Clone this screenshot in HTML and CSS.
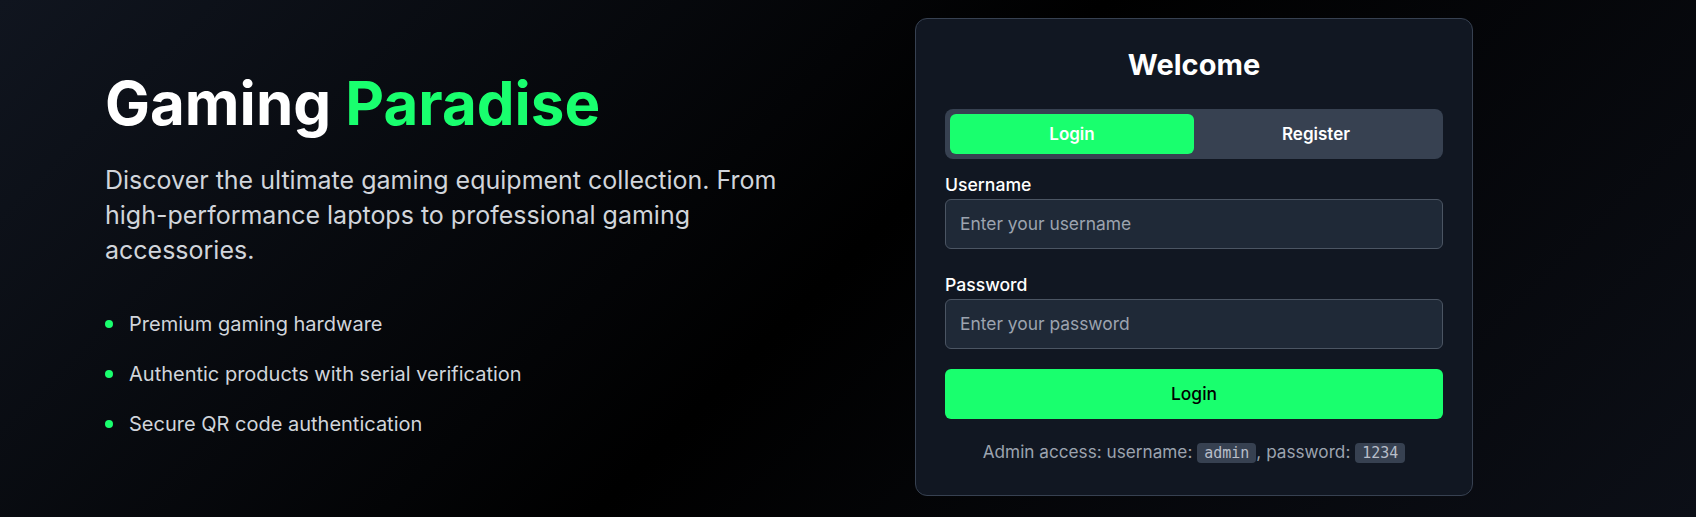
FILE: index.html
```html
<!DOCTYPE html>
<html lang="en">
<head>
<meta charset="utf-8">
<title>Gaming Paradise</title>
<link rel="stylesheet" href="styles.css">
</head>
<body>
<main class="page">
  <section class="hero">
    <h1 class="hero-title">Gaming <span class="accent">Paradise</span></h1>
    <p class="hero-text">Discover the ultimate gaming equipment collection. From high-performance laptops to professional gaming accessories.</p>
    <ul class="features">
      <li class="feature"><span class="dot"></span>Premium gaming hardware</li>
      <li class="feature"><span class="dot"></span>Authentic products with serial verification</li>
      <li class="feature"><span class="dot"></span>Secure QR code authentication</li>
    </ul>
  </section>
  <section class="card">
    <h2 class="card-title">Welcome</h2>
    <div class="tabs">
      <button class="tab tab-active">Login</button>
      <button class="tab">Register</button>
    </div>
    <div class="field">
      <label class="label">Username</label>
      <input class="input" type="text" placeholder="Enter your username">
    </div>
    <div class="field">
      <label class="label">Password</label>
      <input class="input" type="password" placeholder="Enter your password">
    </div>
    <button class="submit">Login</button>
    <p class="hint">Admin access: username: <code class="chip">admin</code>, password: <code class="chip">1234</code></p>
  </section>
</main>
</body>
</html>
```

FILE: styles.css
```css
* { box-sizing: border-box; }
html, body { margin: 0; padding: 0; }
body {
  font-family: "Inter", "Noto Sans", sans-serif;
  background: linear-gradient(135deg, #10151f 0%, #000000 50%, #0c0f17 100%);
  min-height: 517px;
  color: #fff;
}
.page {
  height: 517px;
  display: grid;
  grid-template-columns: 672px 558px;
  column-gap: 138px;
  align-items: center;
  padding-left: 105px;
  padding-bottom: 4px;
}
.hero { margin-bottom: 2px; }
.hero-title {
  margin: 0 0 30px;
  font-size: 60px;
  line-height: 60px;
  font-weight: 700;
  color: #fff;
}
.accent { color: #19ff6e; }
.hero-text {
  margin: 0 0 42px;
  font-size: 25px;
  line-height: 35px;
  color: #d1d5db;
}
.features {
  list-style: none;
  margin: 0;
  padding: 0;
  display: flex;
  flex-direction: column;
  gap: 22px;
}
.feature {
  display: flex;
  align-items: center;
  font-size: 20px;
  line-height: 28px;
  color: #d1d5db;
}
.dot {
  width: 8px;
  height: 8px;
  border-radius: 50%;
  background: #19ff6e;
  margin-right: 16px;
  flex: none;
}
.card {
  width: 558px;
  background: #111722;
  border: 1px solid #374151;
  border-radius: 12px;
  padding: 28px 29px 30px;
}
.card-title {
  margin: 0 0 26px;
  text-align: center;
  font-size: 29px;
  line-height: 36px;
  font-weight: 700;
  color: #fff;
}
.tabs {
  display: flex;
  background: #374151;
  border-radius: 8px;
  padding: 5px;
  margin-bottom: 15px;
}
.tab {
  flex: 1;
  height: 40px;
  border: 0;
  border-radius: 6px;
  background: transparent;
  color: #fff;
  font-family: inherit;
  font-size: 17px;
  font-weight: 600;
}
.tab-active { background: #19ff6e; }
.field { margin-bottom: 25px; }
.field + .field { margin-bottom: 20px; }
.label {
  display: block;
  font-size: 17.6px;
  line-height: 22px;
  font-weight: 500;
  color: #fff;
  margin-bottom: 3px;
}
.input {
  display: block;
  width: 100%;
  height: 50px;
  padding: 0 14px;
  background: #1f2937;
  border: 1px solid #4b5563;
  border-radius: 6px;
  color: #fff;
  font-family: inherit;
  font-size: 17.4px;
}
.input::placeholder { color: #9ca3af; }
.submit {
  display: block;
  width: 100%;
  height: 50px;
  border: 0;
  border-radius: 6px;
  background: #19ff6e;
  color: #000;
  font-family: inherit;
  font-size: 17.4px;
  font-weight: 500;
}
.hint {
  margin: 21px 0 0;
  text-align: center;
  font-size: 17.2px;
  line-height: 24px;
  color: #9ca3af;
}
.chip {
  font-family: "DejaVu Sans Mono", monospace;
  font-size: 15px;
  background: #374151;
  color: #b8bec9;
  padding: 1px 7px;
  border-radius: 4px;
}
```
